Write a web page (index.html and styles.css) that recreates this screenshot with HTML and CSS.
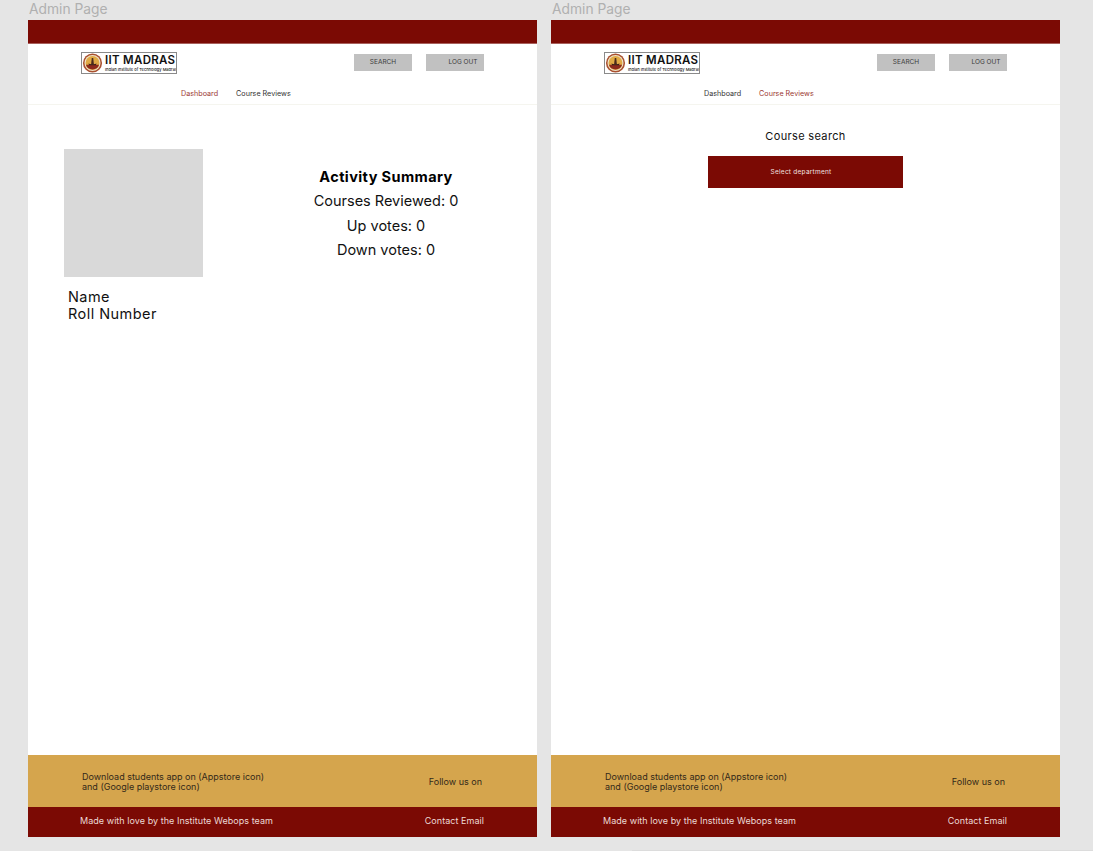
FILE: index.html
```html
<!DOCTYPE html>
<html lang="en">
<head>
  <meta charset="UTF-8" />
  <title>Admin Page</title>
  <link rel="stylesheet" href="styles.css">
</head>
<body>

  <div class="board">

    <!-- Dashboard frame -->
    <section class="artboard">
      <div class="artboard-title">Admin Page</div>
      <div class="frame">
        <div class="top-bar"></div>
        <header class="header">
          <div class="logo">
            <svg class="emblem" viewBox="0 0 22 22" width="21" height="20">
              <circle cx="11" cy="11" r="10.500" fill="#a9502f" />
              <circle cx="11" cy="11" r="8.800" fill="#efe3c8" />
              <circle cx="11" cy="11" r="7.600" fill="#e0aa45" />
              <path d="M3.800 13h14.400c-.8 3-3.700 5.200-7.200 5.200s-6.400-2.200-7.200-5.200z" fill="#8c2a1c" />
              <path d="M10.200 5.500h1.600l.8 7.500h-3.200z" fill="#4a2a1c" />
              <path d="M6.500 11.500c1.500 1.200 7.500 1.200 9 0l-.8 2h-7.400z" fill="#3c2218" />
            </svg>
            <div class="logo-text">
              <span class="logo-name">IIT MADRAS</span>
              <span class="logo-sub">Indian Institute of Technology Madras</span>
            </div>
          </div>
          <div class="header-buttons">
            <a class="btn">SEARCH</a>
            <a class="btn btn-logout">LOG OUT</a>
          </div>
        </header>
        <nav class="nav">
          <a class="nav-link active">Dashboard</a>
          <a class="nav-link">Course Reviews</a>
        </nav>
        <main class="content dashboard">
          <div class="profile">
            <div class="avatar"></div>
            <div class="profile-text">Name<br>Roll Number</div>
          </div>
          <div class="summary">
            <h2>Activity Summary</h2>
            <p>Courses Reviewed: 0</p>
            <p>Up votes: 0</p>
            <p>Down votes: 0</p>
          </div>
        </main>
        <div class="footer-gold">
          <div class="download">Download students app on (Appstore icon)<br>and (Google playstore icon)</div>
          <div class="follow">Follow us on</div>
        </div>
        <footer class="footer-red">
          <div>Made with love by the Institute Webops team</div>
          <div>Contact Email</div>
        </footer>
      </div>
    </section>

    <!-- Course reviews frame -->
    <section class="artboard">
      <div class="artboard-title">Admin Page</div>
      <div class="frame">
        <div class="top-bar"></div>
        <header class="header">
          <div class="logo">
            <svg class="emblem" viewBox="0 0 22 22" width="21" height="20">
              <circle cx="11" cy="11" r="10.500" fill="#a9502f" />
              <circle cx="11" cy="11" r="8.800" fill="#efe3c8" />
              <circle cx="11" cy="11" r="7.600" fill="#e0aa45" />
              <path d="M3.800 13h14.400c-.8 3-3.700 5.200-7.200 5.200s-6.400-2.200-7.200-5.200z" fill="#8c2a1c" />
              <path d="M10.200 5.500h1.600l.8 7.500h-3.200z" fill="#4a2a1c" />
              <path d="M6.500 11.500c1.500 1.200 7.500 1.200 9 0l-.8 2h-7.400z" fill="#3c2218" />
            </svg>
            <div class="logo-text">
              <span class="logo-name">IIT MADRAS</span>
              <span class="logo-sub">Indian Institute of Technology Madras</span>
            </div>
          </div>
          <div class="header-buttons">
            <a class="btn">SEARCH</a>
            <a class="btn btn-logout">LOG OUT</a>
          </div>
        </header>
        <nav class="nav">
          <a class="nav-link">Dashboard</a>
          <a class="nav-link active">Course Reviews</a>
        </nav>
        <main class="content search">
          <h3>Course search</h3>
          <div class="select-dept">Select department</div>
        </main>
        <div class="footer-gold">
          <div class="download">Download students app on (Appstore icon)<br>and (Google playstore icon)</div>
          <div class="follow">Follow us on</div>
        </div>
        <footer class="footer-red">
          <div>Made with love by the Institute Webops team</div>
          <div>Contact Email</div>
        </footer>
      </div>
    </section>

  </div>
  <div class="page-edge"></div>

</body>
</html>
```

FILE: styles.css
```css
* {
  box-sizing: border-box;
}
html, body {
  height: 100%;
}
body {
  font-family: Inter, "Open Sans", sans-serif;
  background: #e5e5e5;
  margin: 0;
  overflow: hidden;
}
.board {
  display: flex;
  gap: 14px;
  height: 850px;
  padding-left: 28px;
}
.page-edge {
  height: 1px;
  margin-left: 632px;
  background: #dcdcdc;
}
.artboard {
  width: 509px;
}
.artboard-title {
  height: 20px;
  padding-left: 1px;
  font-size: 13.800px;
  line-height: 18px;
  color: #b0b0b0;
}
.frame {
  height: 817px;
  background: #fff;
  display: flex;
  flex-direction: column;
}
.top-bar {
  height: 24px;
  background: #7b0a04;
  border-bottom: 1px solid #a8605c;
}
.header {
  height: 36px;
  padding: 8px 53px;
  display: flex;
  justify-content: space-between;
}
.logo {
  width: 96px;
  height: 22px;
  border: 1px solid #8a8a8a;
  display: flex;
  align-items: center;
  overflow: hidden;
}
.emblem {
  flex: none;
}
.logo-text {
  display: flex;
  flex-direction: column;
  margin-left: 2px;
  white-space: nowrap;
}
.logo-name {
  font-size: 11.500px;
  line-height: 13px;
  font-weight: 600;
  letter-spacing: .3px;
  color: #111;
}
.logo-sub {
  font-size: 4px;
  line-height: 5px;
  font-weight: 500;
  color: #222;
}
.header-buttons {
  display: flex;
  gap: 14px;
  padding-top: 2px;
}
.btn {
  width: 58px;
  height: 17px;
  background: #c1c1c1;
  font-size: 6.500px;
  line-height: 17px;
  text-align: center;
  color: #3c3c3c;
}
.btn-logout {
  padding-left: 16px;
}
.nav {
  height: 25px;
  display: flex;
  gap: 18px;
  padding: 9px 0 0 153px;
  border-bottom: 1px solid #f5f5ef;
  font-size: 7.200px;
  line-height: 9px;
  color: #333;
}
.nav-link.active {
  color: #9c3a34;
}
.content {
  flex: 1;
}
.dashboard {
  display: flex;
  padding: 44px 0 0 36px;
}
.profile {
  width: 139px;
}
.avatar {
  height: 128px;
  background: #d9d9d9;
}
.profile-text {
  margin: 11px 0 0 4px;
  font-size: 14.500px;
  line-height: 17px;
  letter-spacing: .45px;
  color: #111;
  white-space: nowrap;
}
.summary {
  width: 146px;
  margin-left: 110px;
  padding-top: 16px;
  text-align: center;
  color: #111;
  white-space: nowrap;
}
.summary h2 {
  margin: 0;
  font-size: 14.500px;
  line-height: 24px;
  font-weight: 700;
  letter-spacing: .4px;
  color: #000;
}
.summary p {
  margin: 0;
  font-size: 14.500px;
  line-height: 24.500px;
}
.search {
  display: flex;
  flex-direction: column;
  align-items: center;
  padding-top: 24px;
}
.search h3 {
  margin: 0;
  font-size: 11px;
  line-height: 14px;
  font-weight: 400;
  letter-spacing: .35px;
  color: #111;
}
.select-dept {
  width: 195px;
  height: 32px;
  margin-top: 13px;
  padding-right: 9px;
  background: #7b0a04;
  color: #f3e4e1;
  font-size: 6.500px;
  line-height: 32px;
  letter-spacing: .25px;
  text-align: center;
}
.footer-gold {
  height: 52px;
  background: #d5a54d;
  display: flex;
  justify-content: space-between;
  align-items: center;
  padding: 2px 55px 0 54px;
  font-size: 9px;
  line-height: 10px;
  color: #33291a;
}
.footer-red {
  height: 30px;
  background: #7b0a04;
  color: #ecd9d5;
  display: flex;
  justify-content: space-between;
  align-items: center;
  padding: 0 53px 4px 52px;
  font-size: 9px;
  letter-spacing: .05px;
}
```
